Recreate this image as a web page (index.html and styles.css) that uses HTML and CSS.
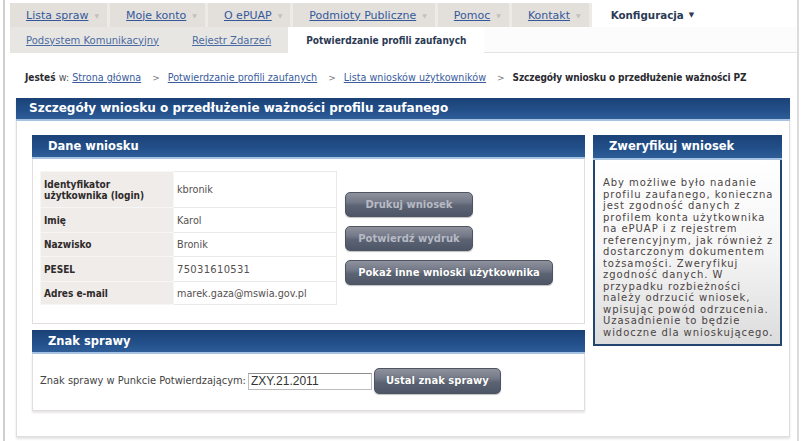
FILE: index.html
```html
<!DOCTYPE html>
<html lang="pl">
<head>
<meta charset="utf-8">
<title>Szczegóły wniosku</title>
<link rel="stylesheet" href="styles.css">
</head>
<body>
<div class="page">
  <div class="nav1">
    <a class="tab" href="#"><span class="lnk">Lista spraw</span><span class="arr">▼</span></a>
    <a class="tab" href="#"><span class="lnk">Moje konto</span><span class="arr">▼</span></a>
    <a class="tab" href="#"><span class="lnk">O ePUAP</span><span class="arr">▼</span></a>
    <a class="tab" href="#"><span class="lnk">Podmioty Publiczne</span><span class="arr">▼</span></a>
    <a class="tab" href="#"><span class="lnk">Pomoc</span><span class="arr">▼</span></a>
    <a class="tab" href="#"><span class="lnk">Kontakt</span><span class="arr">▼</span></a>
    <a class="tab tab-active" href="#"><span class="cur">Konfiguracja</span><span class="arr-dark">▼</span></a>
  </div>
  <div class="nav2">
    <a class="sub" href="#"><span class="lnk">Podsystem Komunikacyjny</span></a>
    <a class="sub" href="#"><span class="lnk">Rejestr Zdarzeń</span></a>
    <span class="sub sub-active">Potwierdzanie profili zaufanych</span>
    <span class="sub-fill"></span>
  </div>
  <div class="crumbs">
    <b>Jesteś</b> w: <a href="#">Strona główna</a><span class="sep">&gt;</span><a href="#">Potwierdzanie profili zaufanych</a><span class="sep">&gt;</span><a href="#">Lista wniosków użytkowników</a><span class="sep">&gt;</span><b class="here">Szczegóły wniosku o przedłużenie ważności PZ</b>
  </div>
  <div class="main">
    <div class="bar main-bar">Szczegóły wniosku o przedłużenie ważności profilu zaufanego</div>
    <div class="main-body">
      <div class="left">
        <div class="panel">
          <div class="bar panel-bar">Dane wniosku</div>
          <div class="panel-body dane">
            <table class="data">
              <tr class="r1"><th>Identyfikator<br>użytkownika (login)</th><td>kbronik</td></tr>
              <tr class="r2"><th>Imię</th><td>Karol</td></tr>
              <tr class="r3"><th>Nazwisko</th><td>Bronik</td></tr>
              <tr class="r4"><th>PESEL</th><td class="pesel">75031610531</td></tr>
              <tr class="r5"><th>Adres e-mail</th><td>marek.gaza@mswia.gov.pl</td></tr>
            </table>
            <div class="btns">
              <button class="btn btn-dis btn-w">Drukuj wniosek</button>
              <button class="btn btn-dis btn-w">Potwierdź wydruk</button>
              <button class="btn btn-wide">Pokaż inne wnioski użytkownika</button>
            </div>
          </div>
        </div>
        <div class="panel znak">
          <div class="bar panel-bar">Znak sprawy</div>
          <div class="panel-body znak-body">
            <label class="znak-label" for="zn">Znak sprawy w Punkcie Potwierdzającym:</label>
            <input id="zn" class="znak-input" type="text" value="ZXY.21.2011">
            <button class="btn btn-znak">Ustal znak sprawy</button>
          </div>
        </div>
      </div>
      <div class="side">
        <div class="side-bar">Zweryfikuj wniosek</div>
        <div class="side-body">Aby możliwe było nadanie<br>profilu zaufanego, konieczna<br>jest zgodność danych z<br>profilem konta użytkownika<br>na ePUAP i z rejestrem<br>referencyjnym, jak również z<br>dostarczonym dokumentem<br>tożsamości. Zweryfikuj<br>zgodność danych. W<br>przypadku rozbieżności<br>należy odrzucić wniosek,<br>wpisując powód odrzucenia.<br>Uzasadnienie to będzie<br>widoczne dla wnioskującego.</div>
      </div>
    </div>
  </div>
</div>
</body>
</html>
```

FILE: styles.css
```css
* { box-sizing: border-box; }
html, body { margin: 0; padding: 0; background: #fff; }
body { font-family: "DejaVu Sans", Verdana, sans-serif; color: #333; }

.page {
  margin-left: 3px;
  width: 796px;
  height: 441px;
  border-left: 2px solid #cfcfcf;
  border-right: 2px solid #dcdcdc;
  overflow: hidden;
}

/* top nav */
.nav1 { display: flex; height: 24px; margin-top: 3px; margin-left: 5px; }
.tab {
  display: flex; align-items: center;
  background: #e3e0dc;
  padding: 0 8px 0 16px;
  border-right: 3px solid #ecebe8;
  text-decoration: none;
  font-size: 11px;
}
.tab .lnk { color: #35589a; text-decoration: underline; }
.tab .arr { color: #c4c0bb; font-size: 6px; margin-left: 6px; }
.tab-active { background: #fff; border-right: none; padding: 0 14px 0 15px; margin-left: 4px; }
.tab-active .cur { color: #2b3a55; font-weight: bold; font-size: 10.3px; }
.tab-active .arr-dark { color: #2b3a55; font-size: 7px; margin-left: 5px; }

.nav2 { display: flex; height: 26px; margin-left: 5px; }
.sub {
  display: flex; align-items: center;
  background: #e8e6e2;
  padding: 0 17px 0 16px;
  font-size: 10px;
  text-decoration: none;
}
.sub .lnk { color: #4a6aa3; text-decoration: underline; }
.sub-active {
  background: #fff; color: #2b3a55; font-weight: bold;
  font-family: "DejaVu Sans Condensed", "DejaVu Sans", sans-serif;
  font-size: 10px; padding: 0 18px;
}
.sub-fill { flex: 1; border-bottom: 1px solid #e4e4e4; background: #fcfcfc; }

/* breadcrumbs */
.crumbs {
  font-size: 9.6px;
  padding: 19px 0 0 20px;
  height: 45px;
  color: #555;
  white-space: nowrap;
}
.crumbs a { color: #3a5c9d; text-decoration: underline; }
.crumbs b { color: #2a2a30; font-family: "DejaVu Sans Condensed", "DejaVu Sans", sans-serif; font-size: 10px; }
.crumbs .sep { color: #777; margin: 0 8px 0 11px; font-size: 9px; }
.crumbs .here { letter-spacing: -0.1px; }

/* main */
.main { margin-left: 11px; width: 774px; height: 339px; border: 1px solid #dedede; border-top: none; box-shadow: 0 2px 2px #e4e4e4; }
.bar {
  color: #fff; font-weight: bold;
  background: linear-gradient(#1b4277, #23508a 60%, #2e5d98);
  border-bottom: 2px solid #a7c3e2;
  white-space: nowrap;
}
.main-bar { height: 23px; line-height: 21px; font-size: 12px; padding-left: 13px; margin: 0 -1px; }
.main-body { display: flex; padding: 14px 0 0 15px; }

.left { width: 553px; }
.panel-bar { height: 24px; line-height: 22px; font-size: 11.5px; padding-left: 16px; }
.panel-body { border: 1px solid #e3dde0; border-top: none; background: #fff; }
.dane { display: flex; align-items: flex-start; height: 165px; padding: 12px 0 0 7px; }

.data { border-collapse: collapse; width: 297px; font-size: 9.7px; }
.data th, .data td { border: 1px solid #ebe9e7; vertical-align: middle; }
.data th {
  background: #efece9; color: #2e2a2a; text-align: left; width: 133px;
  padding: 0 3px; font-weight: bold; line-height: 11px;
  font-family: "DejaVu Sans Condensed", "DejaVu Sans", sans-serif;
  font-size: 10px;
  border-color: #f7f6f5;
}
.data td { color: #555050; padding: 0 3px; }
.data .r1 { height: 36px; }
.data .r2 { height: 25px; }
.data .r3 { height: 24px; }
.data .r4 { height: 25px; }
.data .r5 { height: 23px; }
.data .pesel { font-size: 10px; letter-spacing: 0.3px; }

.btns { display: flex; flex-direction: column; align-items: flex-start; gap: 9px; margin: 21px 0 0 8px; }
.btn {
  font-family: "DejaVu Sans", Verdana, sans-serif;
  font-size: 10px; font-weight: bold; color: #fff;
  height: 25px; padding: 0 8px;
  border: 1px solid #4e5462; border-radius: 5px;
  background: linear-gradient(#8f929c 0%, #737888 40%, #5c6474 55%, #4d5666 100%);
  box-shadow: 0 1px 1px rgba(0,0,0,0.25);
  text-shadow: 0 0 1px #3a3f4a;
  white-space: nowrap; cursor: pointer;
}
.btn-dis { color: #b7bac3; text-shadow: none; }
.btn-w { width: 128px; }
.btn-wide { width: 208px; }

.znak { margin-top: 6px; }
.znak-body { display: flex; align-items: center; height: 57px; padding: 0 0 3px 7px; box-shadow: 0 2px 2px #e6e6e6; }
.znak-label { font-size: 9.9px; color: #444; margin-right: 2px; white-space: nowrap; }
.znak-input {
  width: 124px; height: 17px; margin-top: 1px;
  border: 1px solid #bcbcbc; border-top-color: #8f8f8f;
  font-family: "Liberation Sans", Arial, sans-serif; font-size: 12px; color: #333;
  padding: 0 2px;
}
.btn-znak { width: 127px; height: 26px; margin-left: 2px; }

.side { width: 189px; margin-left: 8px; }
.side-bar {
  height: 25px; line-height: 23px;
  background: linear-gradient(#1b4277, #23508a 60%, #2e5d98);
  color: #fff; font-weight: bold; font-size: 11.5px; padding-left: 16px;
  border-bottom: 2px solid #a7c3e2;
}
.side-body {
  height: 186px;
  border: 2px solid #22466f; border-top: none;
  background: linear-gradient(#ffffff 0%, #f6f5f5 50%, #dcdcdc 100%);
  font-size: 10px; line-height: 11.5px; color: #4a4444;
  letter-spacing: 0.95px;
  padding: 17px 0 0 8px;
  white-space: nowrap;
}
```
